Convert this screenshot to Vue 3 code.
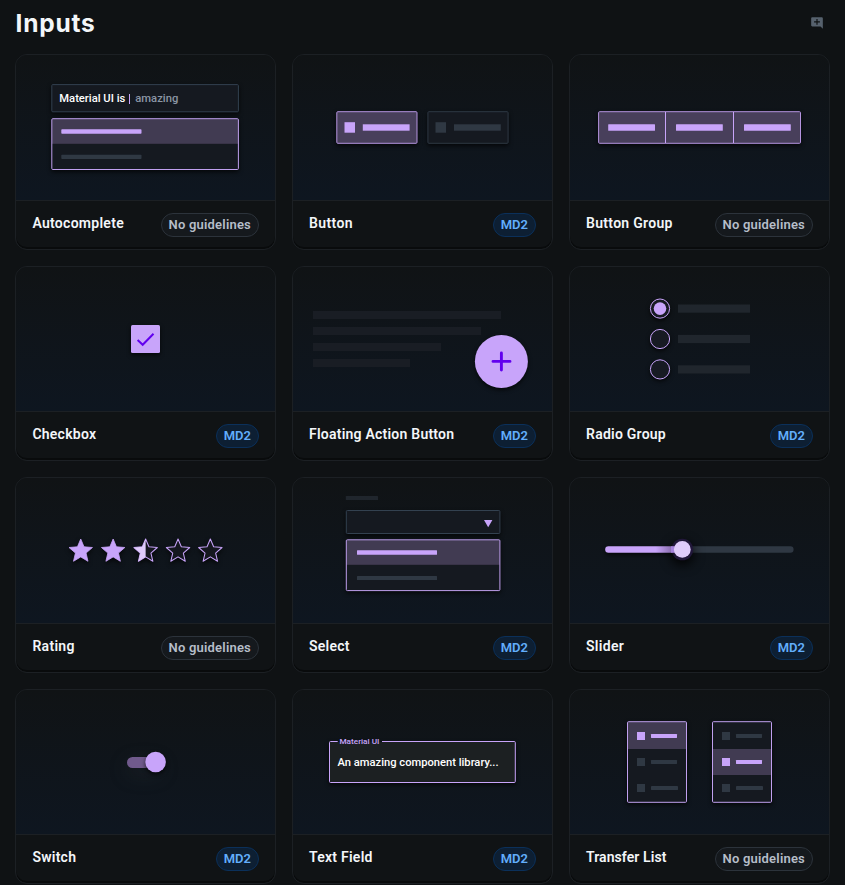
<script setup>
const cards = [
  { kind: 'autocomplete', name: 'Autocomplete', md2: false, track: 0.28 },
  { kind: 'button', name: 'Button', md2: true, track: 0.4 },
  { kind: 'group', name: 'Button Group', md2: false, track: 0.3 },
  { kind: 'checkbox', name: 'Checkbox', md2: true, track: 0.24 },
  { kind: 'fab', name: 'Floating Action Button', md2: true, track: 0.23 },
  { kind: 'radio', name: 'Radio Group', md2: true, track: 0.24 },
  { kind: 'rating', name: 'Rating', md2: false, track: 0.3 },
  { kind: 'select', name: 'Select', md2: true, track: 0.25 },
  { kind: 'slider', name: 'Slider', md2: true, track: 0.3 },
  { kind: 'switch', name: 'Switch', md2: true, track: 0.25 },
  { kind: 'textfield', name: 'Text Field', md2: true, track: 0.25 },
  { kind: 'transfer', name: 'Transfer List', md2: false, track: 0.08 },
]
const star = 'M12 17.27 18.18 21l-1.64-7.03L22 9.24l-7.19-.61L12 2 9.19 8.63 2 9.24l5.46 4.73L5.82 21z'
const fabLines = [188, 168, 128, 97]
const radios = [41.6, 72, 102.4]
const lists = [{ x: 57, on: 0 }, { x: 142, on: 1 }]
</script>

<template>
  <main class="page">
    <header class="head">
      <h1 class="title">Inputs</h1>
      <svg class="feedback" viewBox="0 0 24 24" aria-hidden="true">
        <path d="M22 4c0-1.1-.9-2-2-2H4c-1.1 0-2 .9-2 2v12c0 1.1.9 2 2 2h14l4 4V4zm-5 7h-4v4h-2v-4H7V9h4V5h2v4h4v2z" />
      </svg>
    </header>

    <section class="grid">
      <article v-for="c in cards" :key="c.kind" class="card">
        <div class="media">
          <svg class="art" width="259" height="146" viewBox="0 0 259 146">
            <template v-if="c.kind === 'autocomplete'">
              <rect class="box lift" x="35.8" y="29.6" width="186.6" height="27.2" rx="1" />
              <text class="strong" x="43.3" y="47.4" font-size="11" textLength="66" lengthAdjust="spacingAndGlyphs">Material UI is</text>
              <rect class="accent" x="113" y="39" width="1" height="10" />
              <text class="dim" x="119.3" y="47.4" font-size="11" textLength="43" lengthAdjust="spacingAndGlyphs">amazing</text>
              <g class="lift">
                <rect class="panel" x="35.8" y="63.7" width="186.6" height="50.8" rx="1" />
                <rect class="tint" x="36" y="64" width="186.2" height="24.8" />
                <rect class="frame" x="35.8" y="63.7" width="186.6" height="50.8" rx="1" />
              </g>
              <rect class="accent" x="45.3" y="74.3" width="80.2" height="4.4" rx=".7" />
              <rect class="muted" x="45.3" y="99.8" width="80.2" height="4.2" rx=".7" />
            </template>

            <template v-else-if="c.kind === 'button'">
              <rect class="hot lift" x="43.8" y="56.7" width="80.2" height="31.6" rx="1" />
              <rect class="accent" x="51.5" y="67.2" width="10.5" height="10.5" />
              <rect class="accent" x="69.8" y="69.3" width="46.8" height="6.4" />
              <rect class="cold lift" x="134.9" y="56.7" width="80.2" height="31.6" rx="1" />
              <rect class="muted" x="142.5" y="67.2" width="10.5" height="10.5" />
              <rect class="muted" x="161" y="69.3" width="46.8" height="6.4" />
            </template>

            <template v-else-if="c.kind === 'group'">
              <rect class="hot lift" x="28.6" y="56.7" width="201.9" height="31.6" rx="1" />
              <rect class="accent" x="95" y="57" width="1" height="31" />
              <rect class="accent" x="163" y="57" width="1" height="31" />
              <rect v-for="x in [38.2, 106, 174]" :key="x" class="accent" :x="x" y="69.3" width="46.8" height="6.4" rx=".5" />
            </template>

            <template v-else-if="c.kind === 'checkbox'">
              <rect class="accent lift" x="115" y="58" width="29" height="28" rx="1.5" />
              <path class="ink" d="m121.6 73 5.1 4.8 10.8-11" stroke-width="2" />
            </template>

            <template v-else-if="c.kind === 'fab'">
              <rect v-for="(w, i) in fabLines" :key="w" class="faint" x="20" :y="44 + i * 16" :width="w" height="8" />
              <circle class="accent lift" cx="208.4" cy="94.4" r="26.5" />
              <path class="ink" d="M200 94.4h17M208.4 86v17" stroke-width="2.9" stroke-linecap="round" />
            </template>

            <template v-else-if="c.kind === 'radio'">
              <template v-for="y in radios" :key="y">
                <circle class="ring lift" cx="90" :cy="y" r="9.6" />
                <rect class="soft" x="108" :y="y - 4.1" width="72" height="8.2" />
              </template>
              <circle class="accent" cx="90" cy="41.6" r="6.3" />
            </template>

            <template v-else-if="c.kind === 'rating'">
              <path
                v-for="(x, i) in [50.7, 83.1, 115.6, 148, 180.3]"
                :key="x"
                :class="i < 2 ? 'solid lift' : 'outline lift'"
                :d="star"
                :transform="`translate(${x} 58.7) scale(1.17)`"
              />
              <path fill="#dfcbfb" d="M12 2 9.19 8.63 2 9.24l5.46 4.73L5.82 21 12 17.27z" transform="translate(115.6 58.7) scale(1.17)" />
            </template>

            <template v-else-if="c.kind === 'select'">
              <rect class="soft" x="52.8" y="18" width="32.2" height="4" rx=".5" />
              <rect class="box lift" x="53.3" y="32.5" width="153.6" height="23" rx="1" />
              <path class="accent" d="M191 42h8.4l-4.2 7.2z" />
              <g class="lift">
                <rect class="panel" x="53.3" y="61.8" width="153.6" height="50.8" rx="1" />
                <rect class="tint" x="53.5" y="62" width="153.2" height="24.8" />
                <rect class="frame" x="53.3" y="61.8" width="153.6" height="50.8" rx="1" />
              </g>
              <rect class="accent" x="64" y="72.3" width="80" height="4.4" rx=".5" />
              <rect class="muted" x="64" y="97.9" width="80" height="4.2" rx=".5" />
            </template>

            <template v-else-if="c.kind === 'slider'">
              <defs>
                <linearGradient id="trackFade" x1="35" x2="112" y1="0" y2="0" gradientUnits="userSpaceOnUse">
                  <stop offset=".66" stop-color="#c8a4fa" />
                  <stop offset=".86" stop-color="#8c70b2" />
                  <stop offset="1" stop-color="#5a4776" />
                </linearGradient>
              </defs>
              <rect class="muted" x="100" y="68.3" width="123.6" height="6.4" rx="3.2" />
              <circle class="knob" cx="112.3" cy="71.5" r="10.8" fill="#21173a" />
              <rect class="lift" fill="url(#trackFade)" x="35.2" y="68.3" width="70" height="6.4" rx="3.2" />
              <path fill="#a582dc" d="M101 68.3h6v6.4h-6z" />
              <circle cx="112.3" cy="71.4" r="8.4" fill="#dfcbfb" />
            </template>

            <template v-else-if="c.kind === 'switch'">
              <rect class="glow" x="111" y="67" width="34" height="11" rx="5.5" fill="#705a8c" />
              <circle class="accent lift" cx="139.6" cy="72" r="10.3" />
            </template>

            <template v-else-if="c.kind === 'textfield'">
              <rect class="field lift" x="36.5" y="51.5" width="185.8" height="41" rx="1" />
              <rect x="44.7" y="50.5" width="44.3" height="1.6" fill="#10151a" />
              <text class="tiny" x="46.4" y="54" font-size="7.6" textLength="40" lengthAdjust="spacingAndGlyphs">Material UI</text>
              <text class="strong" x="44.5" y="76.3" font-size="11" textLength="161" lengthAdjust="spacingAndGlyphs">An amazing component library...</text>
            </template>

            <template v-else>
              <g v-for="l in lists" :key="l.x">
                <g class="lift">
                  <rect class="panel" :x="l.x + .5" y="31.7" width="59" height="80.6" rx="1" />
                  <rect class="tint" :x="l.x + .5" :y="l.on ? 59 : 32" width="59" :height="l.on ? 26 : 27" />
                  <rect class="frame" :x="l.x + .5" y="31.7" width="59" height="80.6" rx="1" />
                </g>
                <template v-for="i in 3" :key="i">
                  <rect :class="i - 1 === l.on ? 'accent' : 'muted'" :x="l.x + 10" :y="16 + i * 26" width="8" height="8" />
                  <rect :class="i - 1 === l.on ? 'accent' : 'muted'" :x="l.x + 24" :y="18 + i * 26" :width="i === 3 ? 27 : 26" height="4" rx=".4" />
                </template>
              </g>
            </template>
          </svg>
        </div>
        <footer class="foot">
          <h2 class="name" :style="{ letterSpacing: c.track + 'px' }">{{ c.name }}</h2>
          <span class="chip" :class="{ blue: c.md2 }">{{ c.md2 ? 'MD2' : 'No guidelines' }}</span>
        </footer>
      </article>
    </section>
  </main>
</template>

<style>
body {
  margin: 0;
  background: #0f1214;
  overflow: hidden;
}
</style>

<style scoped>
.page {
  box-sizing: border-box;
  width: 845px;
  height: 885px;
  padding: 0 15px;
  overflow: hidden;
  background: #0f1214;
  color: #f3f6f9;
  font-family: Roboto, "Liberation Sans", sans-serif;
}
.head {
  box-sizing: border-box;
  display: flex;
  justify-content: space-between;
  height: 54px;
  padding: 8px 6.5px 0 0.5px;
}
.title {
  margin: 0;
  font: 700 24.5px/30px Inter, sans-serif;
  letter-spacing: 0.8px;
}
.feedback {
  width: 14px;
  height: 14px;
  margin-top: 8px;
  fill: #56616d;
}
.grid {
  display: grid;
  grid-template-columns: repeat(3, 261px);
  grid-template-rows: 196px 195px 196px 195px;
  gap: 16px;
}
.card {
  box-sizing: border-box;
  display: flex;
  flex-direction: column;
  overflow: hidden;
  border: 1px solid #1c2024;
  border-radius: 12px;
  background: #101315;
  box-shadow: inset 0 -2px 0 #090b0c;
}
.media {
  flex: 1;
  min-height: 0;
  overflow: hidden;
  border-bottom: 1px solid #1c2024;
  background: linear-gradient(180deg, #101315, #0e1620);
}
.art {
  display: block;
}
.foot {
  box-sizing: border-box;
  display: flex;
  flex: none;
  justify-content: space-between;
  align-items: flex-start;
  height: 48px;
  padding: 12px 16px 0;
}
.name {
  margin: 0;
  font-size: 14px;
  font-weight: 600;
  line-height: 21px;
  white-space: nowrap;
}
.card:nth-child(3n + 1) .name {
  padding-left: 0.4px;
}
.chip {
  box-sizing: border-box;
  height: 24px;
  padding: 0 7px;
  border: 1px solid #2c333b;
  border-radius: 12px;
  background: #15191d;
  color: #b6bec9;
  font-size: 13px;
  font-weight: 600;
  line-height: 22px;
  letter-spacing: 0.2px;
  white-space: nowrap;
}
.chip.blue {
  padding: 0 7.1px;
  border-color: #0b305a;
  background: #0d1f33;
  color: #62aefb;
  letter-spacing: 0;
}
.accent, .solid { fill: #c8a4fa; }
.solid { stroke: #c8a4fa; stroke-width: 0.7; stroke-linejoin: round; }
.muted { fill: #2f3843; }
.soft { fill: #20262d; }
.faint { fill: #191d24; }
.panel { fill: #151920; }
.tint { fill: #413b52; }
.frame { fill: none; stroke: #c0a0ef; }
.box { fill: #151920; stroke: #334150; }
.hot { fill: #483f5b; stroke: #b594e0; }
.cold { fill: #151920; stroke: #2f3944; }
.field { fill: #1c2022; stroke: #c8a4fa; }
.ring { fill: #171a23; stroke: #c8a4fa; }
.outline { fill: #15171f; stroke: #c8a4fa; stroke-width: 0.9; stroke-linejoin: round; }
.ink { fill: none; stroke: #6200ee; }
.strong { fill: #fff; font-weight: 500; }
.dim { fill: #8b96a5; font-weight: 500; }
.tiny { fill: #c8a4fa; font-weight: 500; }
.lift { filter: drop-shadow(0 2px 2px rgba(0, 0, 0, 0.7)); }
.knob { filter: drop-shadow(0 4px 6px #000); }
.glow { filter: drop-shadow(0 6px 10px rgba(70, 80, 80, 0.2)); }
</style>
